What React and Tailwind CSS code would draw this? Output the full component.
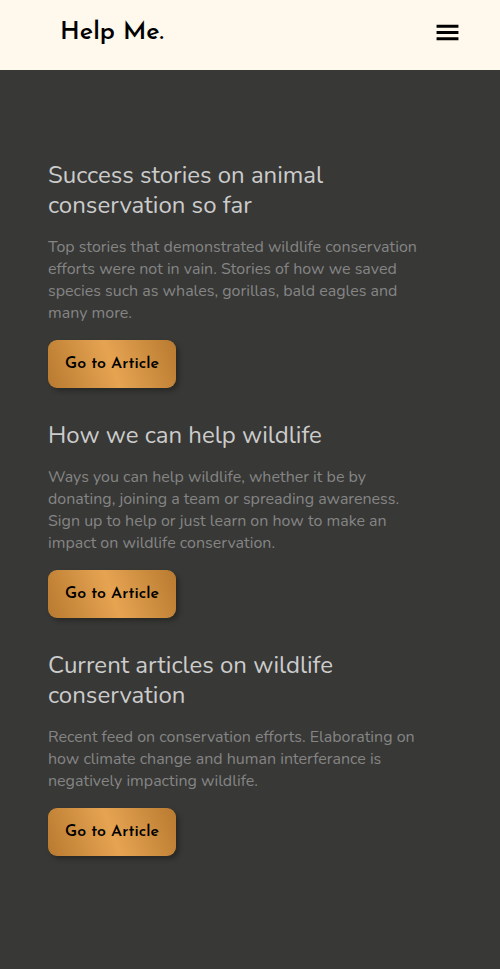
import { GiHamburgerMenu } from 'react-icons/gi';

const articles = [
  {
    title: 'Success stories on animal conservation so far',
    text: 'Top stories that demonstrated wildlife conservation efforts were not in vain. Stories of how we saved species such as whales, gorillas, bald eagles and many more.',
  },
  {
    title: 'How we can help wildlife',
    text: 'Ways you can help wildlife, whether it be by donating, joining a team or spreading awareness. Sign up to help or just learn on how to make an impact on wildlife conservation.',
  },
  {
    title: 'Current articles on wildlife conservation',
    text: 'Recent feed on conservation efforts. Elaborating on how climate change and human interferance is negatively impacting wildlife.',
  },
];

function Header() {
  return (
    <header className="flex h-[70px] items-start justify-between bg-[#fff8ec] pl-[60px] pr-10 pt-3">
      <a href="#" className="font-['Josefin_Sans',Lato,sans-serif] text-[25px] font-semibold leading-[42px] text-black">
        Help Me.
      </a>
      <button type="button" aria-label="Open menu" className="mt-2 text-black">
        <GiHamburgerMenu size={25} />
      </button>
    </header>
  );
}

function Article({ title, text }) {
  return (
    <article className="flex flex-col items-start">
      <h2 className="text-2xl leading-[30px] text-[#cccccc]">{title}</h2>
      <p className="mt-4 text-base leading-[22px] text-[#858585]">{text}</p>
      <button
        type="button"
        className="mt-4 h-12 w-32 rounded-[9px] bg-[linear-gradient(70deg,#b87a30,#e6a452_50%,#b87a30)] font-['Josefin_Sans',Lato,sans-serif] text-base font-semibold text-black shadow-[3px_3px_5px_rgba(0,0,0,0.3)]"
      >
        Go to Article
      </button>
    </article>
  );
}

export default function App() {
  return (
    <div className="flex min-h-screen flex-col bg-[#383836] font-[Nunito,'Open_Sans',sans-serif]">
      <Header />
      <main className="flex flex-col gap-8 pb-28 pl-12 pr-20 pt-[90px]">
        {articles.map((article) => (
          <Article key={article.title} {...article} />
        ))}
      </main>
    </div>
  );
}
